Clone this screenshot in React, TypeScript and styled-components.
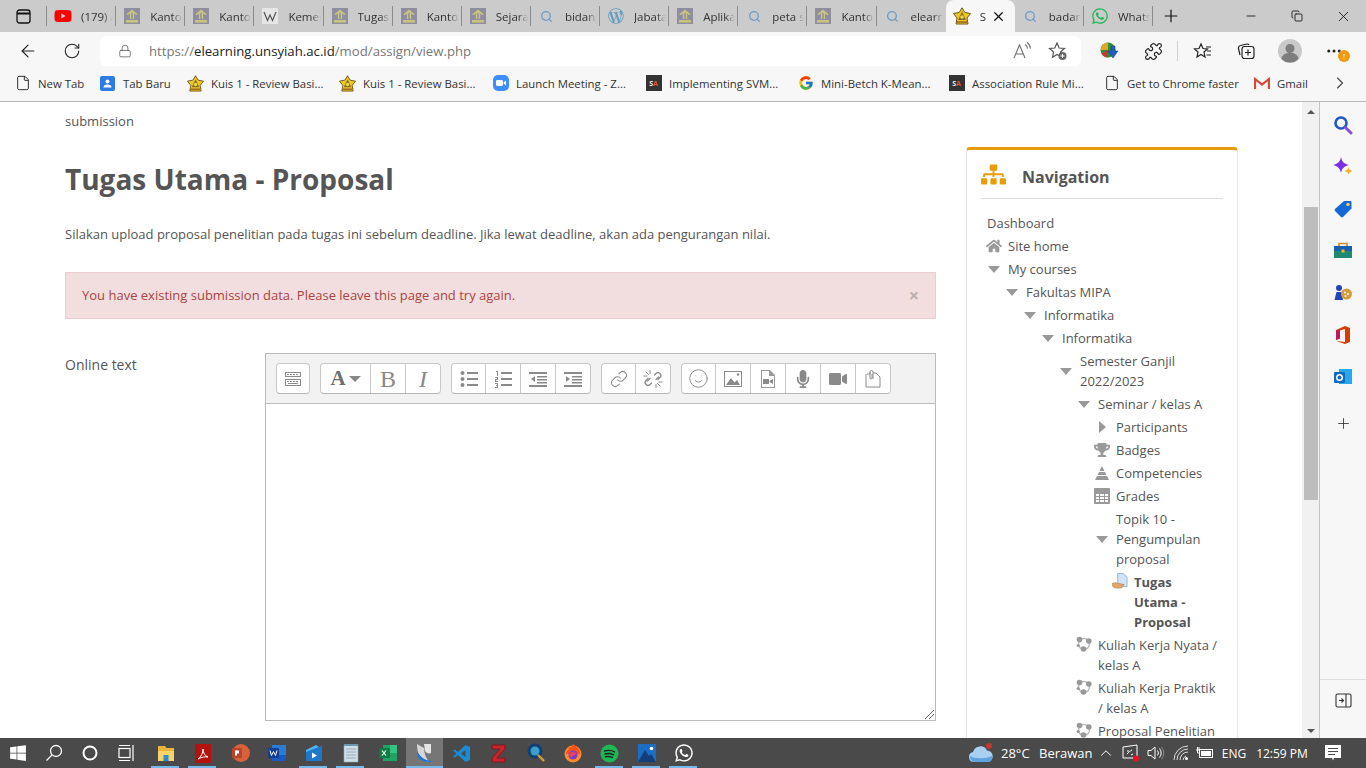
import React from 'react';
import styled, { createGlobalStyle } from 'styled-components';
import {
  ArrowLeft, RotateCw, Lock, Puzzle, Plus, X, Minus, Copy, ChevronRight, ChevronUp, File, Search, Link, Smile, MoreHorizontal,
} from 'lucide-react';
import {
  FaHome, FaSitemap, FaTrophy, FaMicrophone, FaVideo, FaWindows, FaWhatsapp, FaWordpressSimple, FaYoutube,
} from 'react-icons/fa';
import { FcGoogle } from 'react-icons/fc';

const GlobalStyle = createGlobalStyle`
  html, body { margin: 0; padding: 0; height: 100%; overflow: hidden; background: #fff; }
  #root { height: 100%; }
  * { box-sizing: border-box; }
`;

const Screen = styled.div`
  width: 1366px;
  height: 768px;
  display: flex;
  flex-direction: column;
  overflow: hidden;
  font-family: 'Open Sans', 'Noto Sans', sans-serif;
`;

/* ---------- tab strip ---------- */
const TabStrip = styled.div`
  height: 32px;
  flex: none;
  display: flex;
  align-items: flex-end;
  background: #cbcbcb;
`;
const TabToggle = styled.div`
  width: 47px;
  height: 32px;
  display: flex;
  align-items: center;
  justify-content: center;
  position: relative;
  &::after {
    content: '';
    position: absolute;
    right: 0;
    top: 6px;
    height: 20px;
    border-right: 1px solid #8b8b8b;
  }
`;
const Tab = styled.div<{ $active?: boolean; $last?: boolean }>`
  width: 69.125px;
  height: 32px;
  flex: none;
  display: flex;
  align-items: center;
  padding-left: 7px;
  padding-right: ${(p) => (p.$active ? '9px' : '3px')};
  position: relative;
  background: ${(p) => (p.$active ? '#f7f7f7' : 'transparent')};
  border-radius: ${(p) => (p.$active ? '8px 8px 0 0' : '0')};
  &::after {
    content: '';
    position: absolute;
    right: 0;
    top: 6px;
    height: 20px;
    border-right: 1px solid ${(p) => (p.$active || p.$last ? 'transparent' : '#8b8b8b')};
  }
`;
const TabIcon = styled.div`
  width: 18px;
  height: 18px;
  flex: none;
  display: flex;
  align-items: center;
  justify-content: center;
`;
const TabTitle = styled.span`
  margin-left: 9px;
  flex: 1;
  min-width: 0;
  overflow: hidden;
  white-space: nowrap;
  font-size: 11.5px;
  color: #333;
  -webkit-mask-image: linear-gradient(90deg, #000 70%, transparent 100%);
  mask-image: linear-gradient(90deg, #000 70%, transparent 100%);
`;
const NewTab = styled.div`
  width: 36px;
  height: 32px;
  display: flex;
  align-items: center;
  justify-content: center;
`;
const WindowControls = styled.div`
  margin-left: auto;
  height: 32px;
  display: flex;
`;
const WindowButton = styled.div`
  width: 46px;
  height: 32px;
  display: flex;
  align-items: center;
  justify-content: center;
  color: #111;
`;

/* ---------- address bar ---------- */
const Toolbar = styled.div`
  height: 36px;
  flex: none;
  display: flex;
  align-items: flex-start;
  padding: 4px 0 0 6px;
  background: #f7f7f7;
`;
const ToolButton = styled.div`
  width: 44px;
  height: 30px;
  flex: none;
  display: flex;
  align-items: center;
  justify-content: center;
  color: #222;
  position: relative;
`;
const AddressBox = styled.div`
  width: 981px;
  height: 30px;
  margin-left: 6px;
  margin-right: 6px;
  flex: none;
  display: flex;
  align-items: center;
  background: #fff;
  border-radius: 6px;
  padding: 0 5px 0 18px;
  color: #555;
`;
const Url = styled.span`
  margin-left: 17px;
  font-size: 13.2px;
  color: #767676;
  b { font-weight: 400; color: #222; }
`;
const AddressAction = styled.div`
  width: 36px;
  display: flex;
  justify-content: center;
  color: #666;
  &:first-of-type { margin-left: auto; }
`;
const ToolDivider = styled.div`
  width: 1px;
  height: 20px;
  margin: 5px 2px 0 2px;
  background: #cfcfcf;
  flex: none;
`;
const UpdateBadge = styled.span`
  position: absolute;
  left: 26px;
  top: 14px;
  width: 12px;
  height: 12px;
  border-radius: 50%;
  background: #f09a13;
  color: #fff;
  font-size: 9px;
  line-height: 12px;
  text-align: center;
  font-weight: 700;
`;

/* ---------- bookmarks ---------- */
const BookmarkBar = styled.div`
  height: 34px;
  flex: none;
  display: flex;
  align-items: center;
  padding: 0 14px 3px 14px;
  background: #f7f7f7;
  border-bottom: 1px solid #b9b9b9;
`;
const Bookmark = styled.div<{ $w: number }>`
  width: ${(p) => p.$w}px;
  flex: none;
  display: flex;
  align-items: center;
  gap: 7px;
  font-size: 11.4px;
  color: #333;
  white-space: nowrap;
`;
const BookmarkIcon = styled.div`
  width: 17px;
  height: 17px;
  flex: none;
  display: flex;
  align-items: center;
  justify-content: center;
`;
const BookmarkMore = styled.div`
  margin-left: auto;
  margin-right: 2px;
  display: flex;
  color: #444;
`;
const SaBadge = styled.span`
  width: 16px;
  height: 16px;
  display: flex;
  align-items: center;
  justify-content: center;
  background: #333;
  color: #eee;
  font-size: 7px;
  font-weight: 700;
  line-height: 1;
  i { font-style: normal; color: #e0573f; }
`;

/* ---------- viewport ---------- */
const Viewport = styled.div`
  flex: 1;
  min-height: 0;
  display: flex;
`;
const Page = styled.main`
  width: 1302px;
  flex: none;
  overflow: hidden;
  padding: 9px 0 0 65px;
  background: #fff;
  color: #555;
  font-size: 13px;
  line-height: 20px;
`;
const Columns = styled.div`
  display: grid;
  grid-template-columns: 871px 272px;
  column-gap: 30px;
  margin-top: 16px;
  align-items: start;
`;
const Title = styled.h2`
  margin: 15px 0 0;
  font-size: 28px;
  line-height: 34px;
  font-weight: 700;
  color: #555;
`;
const Intro = styled.p`
  margin: 28px 0 0;
`;
const Alert = styled.div`
  margin-top: 28px;
  height: 47px;
  display: flex;
  align-items: center;
  justify-content: space-between;
  padding: 0 16px 2px;
  background: #f2dede;
  border: 1px solid #ebccd1;
  color: #a94442;
`;
const AlertClose = styled.span`
  color: #bdaeae;
  font-size: 18px;
  font-weight: 700;
  line-height: 1;
`;
const FormRow = styled.div`
  margin-top: 34px;
  display: grid;
  grid-template-columns: 200px 671px;
`;
const FormLabel = styled.label`
  font-size: 14px;
  padding-top: 2px;
`;
const Editor = styled.div`
  height: 368px;
  display: flex;
  flex-direction: column;
  border: 1px solid #bbb;
`;
const EditorBar = styled.div`
  height: 50px;
  flex: none;
  display: flex;
  gap: 10px;
  padding: 9px 0 0 10px;
  background: #f2f2f2;
  border-bottom: 1px solid #bbb;
`;
const BtnGroup = styled.div`
  height: 31px;
  display: flex;
  background: #fff;
  border: 1px solid #c8c8c8;
  border-bottom-color: #b5b5b5;
  border-radius: 4px;
`;
const EdBtn = styled.div`
  width: 35px;
  display: flex;
  align-items: center;
  justify-content: center;
  color: #8a8a8a;
  border-left: 1px solid #c8c8c8;
  &:first-child { border-left: 0; width: 33px; }
`;
const CollapseBtn = styled(EdBtn)`
  &&:first-child { width: 32px; }
`;
const FontBtn = styled(EdBtn)`
  gap: 3px;
  &&:first-child { width: 49px; }
`;
const EdLetter = styled.span<{ $italic?: boolean }>`
  font-family: 'Liberation Serif', serif;
  font-size: 24px;
  line-height: 1;
  color: #8a8a8a;
  font-style: ${(p) => (p.$italic ? 'italic' : 'normal')};
`;
const FontLetter = styled.span`
  font-family: 'Liberation Serif', serif;
  font-weight: 700;
  font-size: 21px;
  line-height: 1;
  color: #6f6f6f;
`;
const Caret = styled.span`
  width: 0;
  height: 0;
  border-left: 6px solid transparent;
  border-right: 6px solid transparent;
  border-top: 6px solid #888;
`;
const TextArea = styled.div`
  flex: 1;
  position: relative;
  background: #fff;
`;
const ResizeGrip = styled.svg`
  position: absolute;
  right: 1px;
  bottom: 1px;
`;

/* ---------- navigation block ---------- */
const NavCard = styled.aside`
  width: 272px;
  height: 700px;
  padding: 0 14px;
  background: #fff;
  border: 1px solid #e6e6e6;
  border-top: 3px solid #e69c0b;
  border-radius: 4px 4px 0 0;
`;
const NavHead = styled.div`
  height: 49px;
  display: flex;
  align-items: center;
  border-bottom: 1px solid #ddd;
  color: #e69c0b;
`;
const NavTitle = styled.h3`
  margin: 5px 0 0 16px;
  font-size: 16px;
  font-weight: 700;
  color: #555;
`;
const Tree = styled.ul`
  list-style: none;
  margin: 0;
  padding: 12.5px 0 0;
`;
const TreeRow = styled.li<{ $level: number; $plain?: boolean; $top?: boolean }>`
  display: flex;
  align-items: ${(p) => (p.$top ? 'flex-start' : 'center')};
  gap: 6px;
  padding: 1.5px 0 1.5px ${(p) => (p.$plain ? 6 : 5 + p.$level * 18)}px;
  line-height: 20px;
  white-space: pre-line;
`;
const TreeIcon = styled.span`
  width: 16px;
  height: 18px;
  flex: none;
  display: flex;
  align-items: center;
  justify-content: center;
  color: #999;
`;
const TreeLabel = styled.span<{ $bold?: boolean }>`
  font-weight: ${(p) => (p.$bold ? 700 : 400)};
`;
const ArrowDown = styled.span`
  width: 0;
  height: 0;
  border-left: 6.5px solid transparent;
  border-right: 6.5px solid transparent;
  border-top: 7px solid #999;
`;
const ArrowRight = styled.span`
  width: 0;
  height: 0;
  border-top: 6.5px solid transparent;
  border-bottom: 6.5px solid transparent;
  border-left: 7px solid #999;
`;

/* ---------- scrollbar + edge panel ---------- */
const Scrollbar = styled.div`
  width: 18px;
  flex: none;
  display: flex;
  flex-direction: column;
  align-items: center;
  background: #f1f1f1;
  border-right: 1px solid #c4c4c4;
`;
const ScrollArrow = styled.span<{ $down?: boolean }>`
  width: 0;
  height: 0;
  flex: none;
  margin-top: ${(p) => (p.$down ? 'auto' : '8px')};
  margin-bottom: ${(p) => (p.$down ? '5px' : '0')};
  border-left: 4px solid transparent;
  border-right: 4px solid transparent;
  ${(p) => (p.$down ? 'border-top: 4px solid #555;' : 'border-bottom: 4px solid #555;')}
`;
const ScrollThumb = styled.div`
  width: 14px;
  height: 293px;
  margin-top: 93px;
  background: #bdbdbd;
`;
const EdgePanel = styled.div`
  flex: 1;
  display: flex;
  flex-direction: column;
  align-items: center;
  padding: 2px 0 17px;
  background: #f7f7f7;
`;
const EdgeIcon = styled.div<{ $gap?: boolean }>`
  width: 46px;
  height: 42px;
  flex: none;
  margin-top: ${(p) => (p.$gap ? '4px' : '0')};
  display: flex;
  align-items: center;
  justify-content: center;
  color: #333;
`;
const EdgeFoot = styled(EdgeIcon)`
  margin-top: auto;
  border-top: 1px solid #dedede;
`;

/* ---------- taskbar ---------- */
const Taskbar = styled.footer`
  height: 30px;
  flex: none;
  display: flex;
  align-items: stretch;
  background: #4a4a4a;
  color: #fff;
`;
const SysButton = styled.div`
  width: 36px;
  display: flex;
  align-items: center;
  justify-content: center;
`;
const TaskApps = styled.div`
  display: flex;
  margin-left: 3px;
`;
const TaskApp = styled.div<{ $running?: boolean; $active?: boolean }>`
  width: 37px;
  position: relative;
  display: flex;
  align-items: center;
  justify-content: center;
  background: ${(p) => (p.$active ? '#767676' : 'transparent')};
  &::after {
    content: '';
    display: ${(p) => (p.$running || p.$active ? 'block' : 'none')};
    position: absolute;
    bottom: 0;
    height: 2px;
    left: ${(p) => (p.$active ? '0' : '4px')};
    right: ${(p) => (p.$active ? '0' : '5px')};
    background: #76b9ed;
  }
`;
const Tray = styled.div`
  margin-left: auto;
  padding-right: 12px;
  display: flex;
`;
const TrayItem = styled.div<{ $w: number; $left?: boolean }>`
  width: ${(p) => p.$w}px;
  display: flex;
  align-items: center;
  justify-content: ${(p) => (p.$left ? 'flex-start' : 'center')};
  font-size: 12px;
  white-space: nowrap;
  color: #fff;
`;
const TrayText = styled.span<{ $inset?: boolean }>`
  font-size: 13px;
  padding-left: ${(p) => (p.$inset ? '5px' : '0')};
`;

/* ---------- drawn icons ---------- */
const KantoIcon = ({ size = 16 }: { size?: number }) => (
  <svg width={size} height={size} viewBox="0 0 16 16">
    <rect width="16" height="16" fill="#8e8e9e" />
    <path d="M8 1.500 14 6.500 12 7 10.200 5.600V11H5.800V5.600L4 7 2 6.500Z" fill="#c9c47f" />
    <rect x="2" y="12" width="12" height="2.600" fill="#c9c47f" />
    <rect x="7.300" y="5" width="1.400" height="6" fill="#8e8e9e" />
  </svg>
);
const StarIcon = ({ size = 18 }: { size?: number }) => (
  <svg width={size} height={size} viewBox="0 0 18 18">
    <path d="M9 .8 11.800 5.500 17.500 6.500 14 11 15 17H3L4 11 .5 6.500 6.200 5.500Z" fill="#ecc92a" stroke="#6e5a12" strokeWidth="1" />
    <path d="M9 4.500 13 13H5Z" fill="#8a6d1f" />
    <circle cx="9" cy="10" r="1.800" fill="#f2d64a" />
    <path d="M4 15h10" stroke="#7a2e17" strokeWidth="1" />
  </svg>
);
const WikiIcon = () => (
  <svg width="16" height="16" viewBox="0 0 16 16">
    <rect width="16" height="16" fill="#e6e6e6" rx="1" />
    <path d="M2 4 5.500 12.500 8 7l2.500 5.500L14 4" fill="none" stroke="#555" strokeWidth="1.200" />
  </svg>
);
const SearchFav = () => <Search size={13} strokeWidth={2.4} color="#6a9dcb" />;
const Sa = () => <SaBadge>S<i>A</i></SaBadge>;
const ContactIcon = () => (
  <svg width="15" height="15" viewBox="0 0 15 15">
    <rect width="15" height="15" rx="2" fill="#2d7be5" />
    <circle cx="7.500" cy="5.500" r="2" fill="#fff" />
    <path d="M3.500 11.500a4 3 0 0 1 8 0Z" fill="#fff" />
  </svg>
);
const ZoomIcon = () => (
  <svg width="16" height="16" viewBox="0 0 16 16">
    <rect width="16" height="16" rx="5" fill="#3f8cff" />
    <rect x="3" y="5" width="7" height="6" rx="1.400" fill="#fff" />
    <path d="M10.600 7.400 13 5.600v4.800L10.600 8.600Z" fill="#fff" />
  </svg>
);
const GmailIcon = () => (
  <svg width="16" height="13" viewBox="0 0 16 13">
    <path d="M1 12V2l7 5.500L15 2v10" fill="none" stroke="#d8483b" strokeWidth="2.200" />
  </svg>
);
const IdmIcon = () => (
  <svg width="20" height="20" viewBox="0 0 20 20">
    <circle cx="9" cy="9" r="7.500" fill="#2f8f3c" />
    <path d="M1.500 9A7.500 7.500 0 0 1 9 1.500V9Z" fill="#dfa722" />
    <path d="M2.500 12.500 8 9l1 7.500A7.500 7.500 0 0 1 2.500 12.500Z" fill="#c7392b" />
    <path d="M12 5h4v5h3l-5 7-5.500-7H12Z" fill="#1f5fbf" stroke="#0f3f7f" strokeWidth=".5" />
  </svg>
);
const ReadAloud = () => (
  <svg width="20" height="20" viewBox="0 0 20 20" fill="none" stroke="#707070" strokeWidth="1.100">
    <path d="M2 17 7.500 4l5.500 13M4 13h7" />
    <path d="M13 3.500a5 5 0 0 1 2.500 4M15 1.500a8 8 0 0 1 3.500 6" />
  </svg>
);
const FavPlus = () => (
  <svg width="20" height="20" viewBox="0 0 20 20" fill="none">
    <path d="M9 2l2.200 5 5.300.5-4 3.500 1 5.300L9 13.500l-4.500 2.800 1-5.300-4-3.500L6.800 7Z" stroke="#555" strokeWidth="1.200" />
    <circle cx="14.500" cy="15" r="4" fill="#666" />
    <path d="M12.500 15h4M14.500 13v4" stroke="#fff" strokeWidth="1" />
  </svg>
);
const FavLines = () => (
  <svg width="19" height="19" viewBox="0 0 19 19" fill="none" stroke="#222" strokeWidth="1.200">
    <path d="M8 2l2 4.500 4.500.5L11 10l1 5-4-2.500L4 15l1-5-3.500-3L6 6.500Z" />
    <path d="M13 5h5M14 9h4M13.500 13h4.500" />
  </svg>
);
const Collections = () => (
  <svg width="20" height="20" viewBox="0 0 20 20" fill="none" stroke="#222" strokeWidth="1.200">
    <rect x="6" y="5.500" width="12" height="12" rx="2.500" />
    <path d="M12 8.500v6M9 11.500h6" />
    <path d="M4 14 2.500 7.500A2.500 2.500 0 0 1 4.500 4.500L11 3a2 2 0 0 1 2 1" />
  </svg>
);
const Avatar = () => (
  <svg width="24" height="24" viewBox="0 0 24 24">
    <circle cx="12" cy="12" r="12" fill="#c9c9c9" />
    <circle cx="12" cy="9.500" r="4.500" fill="#7d7d7d" />
    <path d="M3.500 20a8.500 6.500 0 0 1 17 0 12 12 0 0 1-17 0Z" fill="#7d7d7d" />
  </svg>
);
const TabsToggleIcon = () => (
  <svg width="15" height="15" viewBox="0 0 15 15" fill="none" stroke="#111" strokeWidth="1.300">
    <rect x="1" y="1" width="13" height="13" rx="2.500" />
    <path d="M1 4.500h13" strokeWidth="2" />
  </svg>
);

/* editor toolbar icons */
const Svg20 = ({ children }: { children: React.ReactNode }) => (
  <svg width="20" height="20" viewBox="0 0 20 20" fill="#8a8a8a">{children}</svg>
);
const CollapseIcon = () => (
  <Svg20>
    <path d="M2 3h16v5H2Zm1 1v3h14V4ZM2 10h16v7H2Zm1 1v5h14v-5Z" fillRule="evenodd" />
    <path d="M4 5h2v1H4Zm3 0h2v1H7Zm3 0h2v1h-2Zm3 0h2v1h-2ZM4 12h2v1H4Zm3 0h2v1H7Zm3 0h2v1h-2Zm3 0h2v1h-2ZM5 14h10v1H5Z" />
  </Svg20>
);
const BulletIcon = () => (
  <Svg20>
    <circle cx="3.500" cy="4" r="2" /><circle cx="3.500" cy="10" r="2" /><circle cx="3.500" cy="16" r="2" />
    <path d="M8 3h11v2H8Zm0 6h11v2H8Zm0 6h11v2H8Z" />
  </Svg20>
);
const NumberIcon = () => (
  <Svg20>
    <path d="M3 2h2v5H4V3H3ZM2 8h3v3H3v1h2v1H2v-3h2V9H2Zm0 6h3v5H2v-1h2v-1H3v-1h1v-1H2Z" />
    <path d="M8 3h11v2H8Zm0 6h11v2H8Zm0 6h11v2H8Z" />
  </Svg20>
);
const OutdentIcon = () => (
  <Svg20>
    <path d="M1 3h18v2H1Zm8 4h10v1.500H9Zm0 3h10v1.500H9Zm0 3h10v1.500H9ZM1 16h18v2H1ZM7 7v6l-4-3Z" />
  </Svg20>
);
const IndentIcon = () => (
  <Svg20>
    <path d="M1 3h18v2H1Zm8 4h10v1.500H9Zm0 3h10v1.500H9Zm0 3h10v1.500H9ZM1 16h18v2H1ZM3 7v6l4-3Z" />
  </Svg20>
);
const UnlinkIcon = () => (
  <svg width="20" height="20" viewBox="0 0 20 20" fill="none" stroke="#8a8a8a" strokeWidth="1.300" strokeLinecap="round">
    <path d="M11.500 6 13 4.500a2.800 2.800 0 0 1 4 4L15 10.500M8.500 14 7 15.500a2.800 2.800 0 0 1-4-4L5 9.500" />
    <path d="M7 9.500 4.500 12M13 10.500 15.500 8" />
    <path d="M7 1.500v3M3 3l2.500 2.500M1 7h3M13 18.500v-3M17 17l-2.500-2.500M19 13h-3" strokeWidth="1" />
  </svg>
);
const ImageIcon = () => (
  <Svg20>
    <path d="M1 2h18v16H1Zm1 1v14h16V3Z" fillRule="evenodd" />
    <path d="M3 16l5-7 3.500 4.500L14 11l3 5Z" /><circle cx="15" cy="5.500" r="1.200" />
  </Svg20>
);
const VideoFileIcon = () => (
  <Svg20>
    <path d="M3 1h9l5 5v13H3Zm1 1v16h12V7h-5V2Z" fill="#999" fillRule="evenodd" />
    <rect x="5" y="10" width="6" height="5" rx=".5" /><path d="M11.500 12 15 10v5l-3.500-2Z" />
  </Svg20>
);
const PasteIcon = () => (
  <svg width="20" height="20" viewBox="0 0 20 20" fill="none" stroke="#8a8a8a" strokeWidth="1">
    <path d="M4 5h3v-2a1.500 1.500 0 0 1 3 0v7M10 4h3l4 4v10H3V5" />
    <path d="M7 3v6a1 1 0 0 0 2 0V5" />
  </svg>
);

/* nav tree icons */
const PyramidIcon = () => (
  <svg width="16" height="16" viewBox="0 0 16 16" fill="#999">
    <path d="M8 1 10.500 6h-5ZM5 7h6l1.500 3h-9ZM3 11h10l2 4H1Z" />
  </svg>
);
const GradesIcon = () => (
  <svg width="16" height="16" viewBox="0 0 16 16">
    <rect width="16" height="16" rx="1" fill="#999" />
    <path d="M2 6h3v2H2Zm4 0h4v2H6Zm5 0h3v2h-3ZM2 9h3v2H2Zm4 0h4v2H6Zm5 0h3v2h-3ZM2 12h3v2H2Zm4 0h4v2H6Zm5 0h3v2h-3Z" fill="#fff" />
  </svg>
);
const AssignIcon = () => (
  <svg width="17" height="18" viewBox="0 0 17 18">
    <path d="M6 1h6l4 4v10H6Z" fill="#d3e4f6" stroke="#7da6d2" strokeWidth=".8" />
    <path d="M0 12c2-2 4-1 6-.500s5 .500 7 1.500l-3 3.500H4C2 16.500.5 15 0 12Z" fill="#e3a869" stroke="#a87840" strokeWidth=".6" />
  </svg>
);
const CourseIcon = () => (
  <svg width="16" height="16" viewBox="0 0 16 16" fill="#999">
    <circle cx="8" cy="8" r="5.500" fill="none" stroke="#bbb" strokeWidth="1.500" />
    <circle cx="3.500" cy="3.500" r="2.800" /><circle cx="12.800" cy="5" r="2.800" /><circle cx="7.500" cy="13" r="2.800" /><circle cx="2.200" cy="9.500" r="1.600" />
  </svg>
);

/* side panel icons */
const EdgeSearch = () => (
  <svg width="20" height="20" viewBox="0 0 20 20" fill="none">
    <circle cx="8" cy="8" r="5.500" stroke="#1f56c8" strokeWidth="2.600" />
    <path d="M12.500 12.500 18 18" stroke="#8a4fd8" strokeWidth="3" strokeLinecap="round" />
  </svg>
);
const EdgeSpark = () => (
  <svg width="20" height="20" viewBox="0 0 20 20">
    <path d="M8 0c.9 4.500 2.500 6.500 8 8-5.500 1.500-7.100 3.500-8 8-.9-4.500-2.500-6.500-8-8 5.500-1.500 7.100-3.500 8-8Z" fill="#7a2fe0" />
    <path d="M15.500 10c.5 2.200 1.200 3.200 4 4-2.800.8-3.500 1.800-4 4-.5-2.200-1.200-3.200-4-4 2.800-.8 3.500-1.800 4-4Z" fill="#f3b52b" />
  </svg>
);
const EdgeTag = () => (
  <svg width="20" height="20" viewBox="0 0 20 20">
    <path d="M11 2h6.500a1 1 0 0 1 1 1v6.500L10 18a1.500 1.500 0 0 1-2 0L2 12a1.500 1.500 0 0 1 0-2Z" fill="#1469d6" />
    <circle cx="15" cy="5.500" r="1.700" fill="#f6c84c" />
  </svg>
);
const EdgeTools = () => (
  <svg width="20" height="20" viewBox="0 0 20 20">
    <path d="M6 5V2.500h8V5" fill="none" stroke="#d8862a" strokeWidth="1.600" />
    <rect x="1" y="5" width="18" height="5" fill="#1a5fae" />
    <rect x="1" y="10" width="18" height="7" fill="#1f8a72" />
    <rect x="8.500" y="8.500" width="3" height="3" fill="#f3b52b" />
  </svg>
);
const EdgeGames = () => (
  <svg width="20" height="20" viewBox="0 0 20 20">
    <circle cx="6" cy="5" r="3" fill="#1f45b8" />
    <path d="M3.500 9h5l1.500 8H1.500Z" fill="#1f45b8" />
    <circle cx="13.500" cy="11" r="5.500" fill="#d99a3a" />
    <circle cx="12" cy="9.500" r="1" fill="#fff" /><circle cx="15" cy="11" r="1" fill="#fff" /><circle cx="12.500" cy="13" r="1" fill="#fff" />
  </svg>
);
const EdgeOffice = () => (
  <svg width="20" height="20" viewBox="0 0 20 20">
    <path d="M12 1l5 2v14l-5 2-9-3 9 1V4L7 5.500v8L3 15V5Z" fill="#d83b01" />
    <path d="M3 5 7 5.500v8L3 15Z" fill="#c2185b" />
  </svg>
);
const EdgeOutlook = () => (
  <svg width="20" height="20" viewBox="0 0 20 20">
    <rect x="6" y="2" width="13" height="15" fill="#28a8ea" />
    <rect x="1" y="5" width="11" height="11" rx="1" fill="#0f6cbd" />
    <circle cx="6.500" cy="10.500" r="2.800" fill="none" stroke="#fff" strokeWidth="1.500" />
  </svg>
);
const EdgeSplit = () => (
  <svg width="17" height="17" viewBox="0 0 17 17" fill="none" stroke="#333" strokeWidth="1.100">
    <rect x="1" y="2" width="15" height="13" rx="1.500" />
    <path d="M11 2v13M4 8.500h4.500M6.500 6.500l2 2-2 2" />
  </svg>
);

/* taskbar app icons */
const Explorer = () => (
  <svg width="18" height="18" viewBox="0 0 18 18">
    <path d="M1 2h7l1.500 2H17v4H1Z" fill="#e9b53c" />
    <rect x="1" y="7" width="16" height="10" fill="#f6d36b" />
    <rect x="6.500" y="11" width="5" height="6" fill="#2f8ad0" />
  </svg>
);
const Pdf = () => (
  <svg width="16" height="19" viewBox="0 0 16 19">
    <rect width="16" height="19" rx="1" fill="#b3120f" />
    <path d="M3 15c3-2 5-6 5-10 0 4 2 7 5 8-3-.5-6 0-10 2Z" fill="none" stroke="#fff" strokeWidth="1" />
  </svg>
);
const Ppt = () => (
  <svg width="20" height="20" viewBox="0 0 20 20">
    <circle cx="11" cy="10" r="9" fill="#d9603a" />
    <rect x="2" y="5" width="10" height="10" rx="1" fill="#b7472a" />
    <rect x="5" y="7.500" width="2" height="5" fill="#fff" /><rect x="6" y="7.500" width="3" height="3" fill="#fff" />
  </svg>
);
const Word = () => (
  <svg width="20" height="20" viewBox="0 0 20 20">
    <rect x="5" y="2" width="14" height="16" fill="#2b7cd3" />
    <rect x="5" y="12" width="14" height="6" fill="#185abd" />
    <rect x="1" y="5" width="11" height="10" rx="1" fill="#103f91" />
    <path d="M3 7.500 4.500 12.500 6.500 8.500 8.500 12.500 10 7.500" fill="none" stroke="#fff" strokeWidth="1" />
  </svg>
);
const Movie = () => (
  <svg width="18" height="19" viewBox="0 0 18 19">
    <path d="M1 6 17 2v15H1Z" fill="#1d78c9" />
    <path d="M1 6 11 1l3 2-13 5Z" fill="#53b1ee" />
    <path d="M7 8.500v6l5-3Z" fill="#fff" />
  </svg>
);
const Notepad = () => (
  <svg width="16" height="20" viewBox="0 0 16 20">
    <rect x="1" y="2" width="14" height="17" fill="#cfe0e8" stroke="#8fa9b5" strokeWidth=".6" />
    <path d="M3 6h10M3 9h10M3 12h10M3 15h10" stroke="#8aa0aa" strokeWidth=".8" />
    <rect x="1" y="1" width="14" height="2" fill="#6d97ad" />
  </svg>
);
const Excel = () => (
  <svg width="20" height="20" viewBox="0 0 20 20">
    <rect x="5" y="2" width="14" height="16" fill="#21a366" />
    <rect x="12" y="2" width="7" height="8" fill="#33c481" />
    <rect x="1" y="5" width="11" height="10" rx="1" fill="#107c41" />
    <path d="M4 7.500l4 5M8 7.500l-4 5" stroke="#fff" strokeWidth="1.200" />
  </svg>
);
const ActiveApp = () => (
  <svg width="20" height="20" viewBox="0 0 20 20">
    <path d="M2 1c0 10 3 16 12 18-3-4-5-9-5-14Z" fill="#d6d6d6" />
    <path d="M9 1h7v9c-2 1-5 0-6-2Z" fill="#e6e6e6" />
    <path d="M2 8c0 7 4 11 13 11l3-1C10 18 5 14 2 8Z" fill="#1877d6" />
  </svg>
);
const VsCode = () => (
  <svg width="19" height="19" viewBox="0 0 19 19">
    <path d="M13.500 1 18 3v13l-4.500 2L6 11l-3 2.500L1 12.500 4.500 9.500 1 6.500 3 5.500 6 8Zm0 5L9 9.500l4.500 3.500Z" fill="#1b8bd6" fillRule="evenodd" />
  </svg>
);
const ZApp = () => (
  <svg width="15" height="19" viewBox="0 0 15 19">
    <path d="M1 1h13v4L6 14h8v4H1v-4l8-9H1Z" fill="#c4242b" stroke="#7e1318" strokeWidth=".8" />
  </svg>
);
const Magnifier = () => (
  <svg width="20" height="20" viewBox="0 0 20 20">
    <circle cx="9" cy="8" r="7.500" fill="#123f73" />
    <circle cx="9" cy="8" r="4.500" fill="#39a0c9" />
    <path d="M12 12l6 6" stroke="#d2a02e" strokeWidth="2.400" />
  </svg>
);
const Firefox = () => (
  <svg width="20" height="20" viewBox="0 0 20 20">
    <circle cx="10" cy="11" r="8.500" fill="#ff8a2a" />
    <path d="M10 1c3 2 7 5 7 10H3c0-3 3-4 3-7 2 1 3 0 4-3Z" fill="#f6511d" />
    <circle cx="10" cy="12" r="4.500" fill="#7b3fc4" />
    <path d="M6 10c3-2 6-1 8 1-3 0-4 3-6 3-2-1-2-3-2-4Z" fill="#e9436b" />
  </svg>
);
const Spotify = () => (
  <svg width="19" height="19" viewBox="0 0 19 19" fill="none">
    <circle cx="9.500" cy="9.500" r="9" fill="#1db954" />
    <path d="M4.500 7c3.500-1 7-.800 10 .800M5 10c3-.8 6-.600 8.500.8M5.500 12.800c2.500-.6 5-.400 7 .7" stroke="#222" strokeWidth="1.400" strokeLinecap="round" />
  </svg>
);
const Photos = () => (
  <svg width="18" height="18" viewBox="0 0 18 18">
    <rect width="18" height="18" fill="#1b6fc2" />
    <path d="M0 18 7 6l4 6 2-2 5 8Z" fill="#143e7a" />
    <circle cx="13.500" cy="4.500" r="1.800" fill="#fff" />
  </svg>
);
const TaskSearch = () => (
  <svg width="18" height="18" viewBox="0 0 18 18" fill="none" stroke="#fff" strokeWidth="1.300">
    <circle cx="11" cy="7" r="5.500" />
    <path d="M7 11 1.500 16.500" />
  </svg>
);
const Cortana = () => (
  <svg width="16" height="16" viewBox="0 0 16 16" fill="none" stroke="#fff" strokeWidth="2"><circle cx="8" cy="8" r="6.500" /></svg>
);
const TaskView = () => (
  <svg width="18" height="18" viewBox="0 0 18 18" fill="none" stroke="#fff" strokeWidth="1.200"><rect x="2" y="4.500" width="11" height="9" /><path d="M2 1.500h11M2 16.500h11M16 1v16" /></svg>
);
const WeatherCloud = () => (
  <svg width="26" height="24" viewBox="0 0 26 24">
    <path d="M6 21a5 5 0 0 1-1-9.900A7.500 7.500 0 0 1 19 9.500a5.800 5.800 0 0 1 1 11.500Z" fill="#a9d0f0" />
    <path d="M2 15c5 3 16 3 22 0 1 3-1 6-4 6H6c-2 0-4-3-4-6Z" fill="#5fa3e0" />
    <circle cx="21" cy="5" r="3" fill="#c0392b" />
  </svg>
);
const MeetIcon = () => (
  <svg width="20" height="20" viewBox="0 0 20 20" fill="none" stroke="#fff" strokeWidth="1">
    <path d="M2 4l14-2v13H2Z" />
    <path d="M6 11c2-2 3-3 5-4M6 8h2M10 12l2-1" />
    <circle cx="15" cy="15.500" r="3" fill="#e81123" stroke="none" />
  </svg>
);
const SpeakerIcon = () => (
  <svg width="18" height="16" viewBox="0 0 18 16" fill="none" stroke="#fff" strokeWidth="1">
    <path d="M1 5.500h3L8 2v12L4 10.500H1Z" />
    <path d="M10.500 5.500a4 4 0 0 1 0 5M12.500 3.500a7 7 0 0 1 0 9" />
    <path d="M14.500 2a9 9 0 0 1 0 12" stroke="#888" />
  </svg>
);
const WifiIcon = () => (
  <svg width="16" height="16" viewBox="0 0 16 16" fill="none" stroke="#ddd" strokeWidth="1">
    <path d="M1 15A14 14 0 0 1 15 1M4 15A11 11 0 0 1 15 4M7 15a8 8 0 0 1 8-8M10 15a5 5 0 0 1 3-4" />
    <circle cx="13.500" cy="13.500" r="1.500" fill="#fff" stroke="none" />
  </svg>
);
const BatteryIcon = () => (
  <svg width="18" height="14" viewBox="0 0 18 14" fill="none" stroke="#fff" strokeWidth="1">
    <rect x="3.500" y="3.500" width="13" height="8" />
    <rect x="5" y="5" width="10" height="5" fill="#fff" stroke="none" />
    <path d="M0 4h4M1.500 1v3M3 1v3M1.500 4v3h2" />
  </svg>
);
const NotifyIcon = () => (
  <svg width="18" height="18" viewBox="0 0 18 18">
    <path d="M1 1h16v13h-7l-1 2.500L8 14H1Z" fill="#fff" />
    <path d="M4 4.500h10M4 7.500h10M4 10.500h7" stroke="#4a4a4a" />
  </svg>
);

/* ---------- data ---------- */
type TabData = { icon: React.ReactNode; title: string; last?: boolean };
const tabs: TabData[] = [
  { icon: <FaYoutube size={18} color="#f00" />, title: '(179) /' },
  { icon: <KantoIcon />, title: 'Kantor' },
  { icon: <KantoIcon />, title: 'Kantor' },
  { icon: <WikiIcon />, title: 'Kemen' },
  { icon: <KantoIcon />, title: 'Tugas' },
  { icon: <KantoIcon />, title: 'Kantor' },
  { icon: <KantoIcon />, title: 'Sejara' },
  { icon: <SearchFav />, title: 'bidang' },
  { icon: <FaWordpressSimple size={16} color="#5f9cc0" />, title: 'Jabata' },
  { icon: <KantoIcon />, title: 'Aplika' },
  { icon: <SearchFav />, title: 'peta s' },
  { icon: <KantoIcon />, title: 'Kantor' },
  { icon: <SearchFav />, title: 'elearn', last: true },
];
const tabsAfter: TabData[] = [
  { icon: <SearchFav />, title: 'badan' },
  { icon: <FaWhatsapp size={18} color="#1fb855" />, title: 'Whats' },
];

const bookmarks: { w: number; icon: React.ReactNode; label: string }[] = [
  { w: 85, icon: <File size={16} strokeWidth={1.4} color="#222" />, label: 'New Tab' },
  { w: 88, icon: <ContactIcon />, label: 'Tab Baru' },
  { w: 152, icon: <StarIcon size={17} />, label: 'Kuis 1 - Review Basi...' },
  { w: 153, icon: <StarIcon size={17} />, label: 'Kuis 1 - Review Basi...' },
  { w: 153, icon: <ZoomIcon />, label: 'Launch Meeting - Z...' },
  { w: 152, icon: <Sa />, label: 'Implementing SVM...' },
  { w: 151, icon: <FcGoogle size={16} />, label: 'Mini-Betch K-Mean...' },
  { w: 155, icon: <Sa />, label: 'Association Rule Mi...' },
  { w: 150, icon: <File size={16} strokeWidth={1.4} color="#222" />, label: 'Get to Chrome faster' },
  { w: 70, icon: <GmailIcon />, label: 'Gmail' },
];

const down = <ArrowDown />;
const treeRows: { level: number; icon?: React.ReactNode; label: string; bold?: boolean; top?: boolean }[] = [
  { level: 0, icon: <FaHome size={16} />, label: 'Site home' },
  { level: 0, icon: down, label: 'My courses' },
  { level: 1, icon: down, label: 'Fakultas MIPA' },
  { level: 2, icon: down, label: 'Informatika' },
  { level: 3, icon: down, label: 'Informatika' },
  { level: 4, icon: down, label: 'Semester Ganjil\n2022/2023' },
  { level: 5, icon: down, label: 'Seminar / kelas A' },
  { level: 6, icon: <ArrowRight />, label: 'Participants' },
  { level: 6, icon: <FaTrophy size={16} />, label: 'Badges' },
  { level: 6, icon: <PyramidIcon />, label: 'Competencies' },
  { level: 6, icon: <GradesIcon />, label: 'Grades' },
  { level: 6, icon: down, label: 'Topik 10 -\nPengumpulan\nproposal' },
  { level: 7, icon: <AssignIcon />, label: 'Tugas\nUtama -\nProposal', bold: true, top: true },
  { level: 5, icon: <CourseIcon />, label: 'Kuliah Kerja Nyata /\nkelas A', top: true },
  { level: 5, icon: <CourseIcon />, label: 'Kuliah Kerja Praktik\n/ kelas A', top: true },
  { level: 5, icon: <CourseIcon />, label: 'Proposal Penelitian\n/ kelas A', top: true },
];

const apps: { icon: React.ReactNode; running?: boolean; active?: boolean }[] = [
  { icon: <Explorer />, running: true },
  { icon: <Pdf />, running: true },
  { icon: <Ppt /> },
  { icon: <Word /> },
  { icon: <Movie />, running: true },
  { icon: <Notepad />, running: true },
  { icon: <Excel /> },
  { icon: <ActiveApp />, active: true },
  { icon: <VsCode /> },
  { icon: <ZApp /> },
  { icon: <Magnifier /> },
  { icon: <Firefox /> },
  { icon: <Spotify />, running: true },
  { icon: <Photos />, running: true },
  { icon: <FaWhatsapp size={20} color="#fff" />, running: true },
];

export default function App() {
  return (
    <Screen>
      <GlobalStyle />
      <TabStrip>
        <TabToggle><TabsToggleIcon /></TabToggle>
        {tabs.map((t, i) => (
          <Tab key={i} $last={t.last}>
            <TabIcon>{t.icon}</TabIcon>
            <TabTitle>{t.title}</TabTitle>
          </Tab>
        ))}
        <Tab $active>
          <TabIcon><StarIcon /></TabIcon>
          <TabTitle>S</TabTitle>
          <X size={15} color="#111" strokeWidth={2} />
        </Tab>
        {tabsAfter.map((t, i) => (
          <Tab key={i}>
            <TabIcon>{t.icon}</TabIcon>
            <TabTitle>{t.title}</TabTitle>
          </Tab>
        ))}
        <NewTab><Plus size={20} strokeWidth={1.4} color="#111" /></NewTab>
        <WindowControls>
          <WindowButton><Minus size={14} strokeWidth={1.4} /></WindowButton>
          <WindowButton><Copy size={12} strokeWidth={1.7} /></WindowButton>
          <WindowButton><X size={17} strokeWidth={1.2} /></WindowButton>
        </WindowControls>
      </TabStrip>

      <Toolbar>
        <ToolButton><ArrowLeft size={20} strokeWidth={1.4} /></ToolButton>
        <ToolButton><RotateCw size={18} strokeWidth={1.4} /></ToolButton>
        <AddressBox>
          <Lock size={14} strokeWidth={1.3} />
          <Url>https://<b>elearning.unsyiah.ac.id</b>/mod/assign/view.php</Url>
          <AddressAction><ReadAloud /></AddressAction>
          <AddressAction><FavPlus /></AddressAction>
        </AddressBox>
        <ToolButton><IdmIcon /></ToolButton>
        <ToolButton><Puzzle size={19} strokeWidth={1.5} /></ToolButton>
        <ToolDivider />
        <ToolButton><FavLines /></ToolButton>
        <ToolButton><Collections /></ToolButton>
        <ToolButton><Avatar /></ToolButton>
        <ToolButton>
          <MoreHorizontal size={18} strokeWidth={2} />
          <UpdateBadge>↑</UpdateBadge>
        </ToolButton>
      </Toolbar>

      <BookmarkBar>
        {bookmarks.map((b, i) => (
          <Bookmark key={i} $w={b.w}>
            <BookmarkIcon>{b.icon}</BookmarkIcon>
            {b.label}
          </Bookmark>
        ))}
        <BookmarkMore><ChevronRight size={20} strokeWidth={1.3} /></BookmarkMore>
      </BookmarkBar>

      <Viewport>
        <Page>
          submission
          <Columns>
            <div>
              <Title>Tugas Utama - Proposal</Title>
              <Intro>Silakan upload proposal penelitian pada tugas ini sebelum deadline. Jika lewat deadline, akan ada pengurangan nilai.</Intro>
              <Alert>
                You have existing submission data. Please leave this page and try again.
                <AlertClose>×</AlertClose>
              </Alert>
              <FormRow>
                <FormLabel>Online text</FormLabel>
                <Editor>
                  <EditorBar>
                    <BtnGroup><CollapseBtn><CollapseIcon /></CollapseBtn></BtnGroup>
                    <BtnGroup>
                      <FontBtn><FontLetter>A</FontLetter><Caret /></FontBtn>
                      <EdBtn><EdLetter>B</EdLetter></EdBtn>
                      <EdBtn><EdLetter $italic>I</EdLetter></EdBtn>
                    </BtnGroup>
                    <BtnGroup>
                      <EdBtn><BulletIcon /></EdBtn>
                      <EdBtn><NumberIcon /></EdBtn>
                      <EdBtn><OutdentIcon /></EdBtn>
                      <EdBtn><IndentIcon /></EdBtn>
                    </BtnGroup>
                    <BtnGroup>
                      <EdBtn><Link size={18} strokeWidth={1.4} /></EdBtn>
                      <EdBtn><UnlinkIcon /></EdBtn>
                    </BtnGroup>
                    <BtnGroup>
                      <EdBtn><Smile size={21} strokeWidth={1.1} /></EdBtn>
                      <EdBtn><ImageIcon /></EdBtn>
                      <EdBtn><VideoFileIcon /></EdBtn>
                      <EdBtn><FaMicrophone size={18} /></EdBtn>
                      <EdBtn><FaVideo size={18} /></EdBtn>
                      <EdBtn><PasteIcon /></EdBtn>
                    </BtnGroup>
                  </EditorBar>
                  <TextArea>
                    <ResizeGrip width="10" height="10" viewBox="0 0 10 10" stroke="#666">
                      <path d="M1 10 10 1M5 10l5-5" />
                    </ResizeGrip>
                  </TextArea>
                </Editor>
              </FormRow>
            </div>

            <NavCard>
              <NavHead>
                <FaSitemap size={25} />
                <NavTitle>Navigation</NavTitle>
              </NavHead>
              <Tree>
                <TreeRow $level={0} $plain>Dashboard</TreeRow>
                {treeRows.map((r, i) => (
                  <TreeRow key={i} $level={r.level} $top={r.top}>
                    <TreeIcon>{r.icon}</TreeIcon>
                    <TreeLabel $bold={r.bold}>{r.label}</TreeLabel>
                  </TreeRow>
                ))}
              </Tree>
            </NavCard>
          </Columns>
        </Page>

        <Scrollbar>
          <ScrollArrow />
          <ScrollThumb />
          <ScrollArrow $down />
        </Scrollbar>

        <EdgePanel>
          <EdgeIcon><EdgeSearch /></EdgeIcon>
          <EdgeIcon><EdgeSpark /></EdgeIcon>
          <EdgeIcon><EdgeTag /></EdgeIcon>
          <EdgeIcon><EdgeTools /></EdgeIcon>
          <EdgeIcon><EdgeGames /></EdgeIcon>
          <EdgeIcon><EdgeOffice /></EdgeIcon>
          <EdgeIcon><EdgeOutlook /></EdgeIcon>
          <EdgeIcon $gap><Plus size={17} strokeWidth={1.2} /></EdgeIcon>
          <EdgeFoot><EdgeSplit /></EdgeFoot>
        </EdgePanel>
      </Viewport>

      <Taskbar>
        <SysButton><FaWindows size={18} /></SysButton>
        <SysButton><TaskSearch /></SysButton>
        <SysButton><Cortana /></SysButton>
        <SysButton><TaskView /></SysButton>
        <TaskApps>
          {apps.map((a, i) => (
            <TaskApp key={i} $running={a.running} $active={a.active}>{a.icon}</TaskApp>
          ))}
        </TaskApps>
        <Tray>
          <TrayItem $w={30}><WeatherCloud /></TrayItem>
          <TrayItem $w={43} $left><TrayText $inset>28°C</TrayText></TrayItem>
          <TrayItem $w={55} $left><TrayText>Berawan</TrayText></TrayItem>
          <TrayItem $w={24}><ChevronUp size={18} strokeWidth={1.3} /></TrayItem>
          <TrayItem $w={26}><MeetIcon /></TrayItem>
          <TrayItem $w={24}><SpeakerIcon /></TrayItem>
          <TrayItem $w={26}><WifiIcon /></TrayItem>
          <TrayItem $w={22}><BatteryIcon /></TrayItem>
          <TrayItem $w={36}>ENG</TrayItem>
          <TrayItem $w={60}>12:59 PM</TrayItem>
          <TrayItem $w={42}><NotifyIcon /></TrayItem>
        </Tray>
      </Taskbar>
    </Screen>
  );
}
